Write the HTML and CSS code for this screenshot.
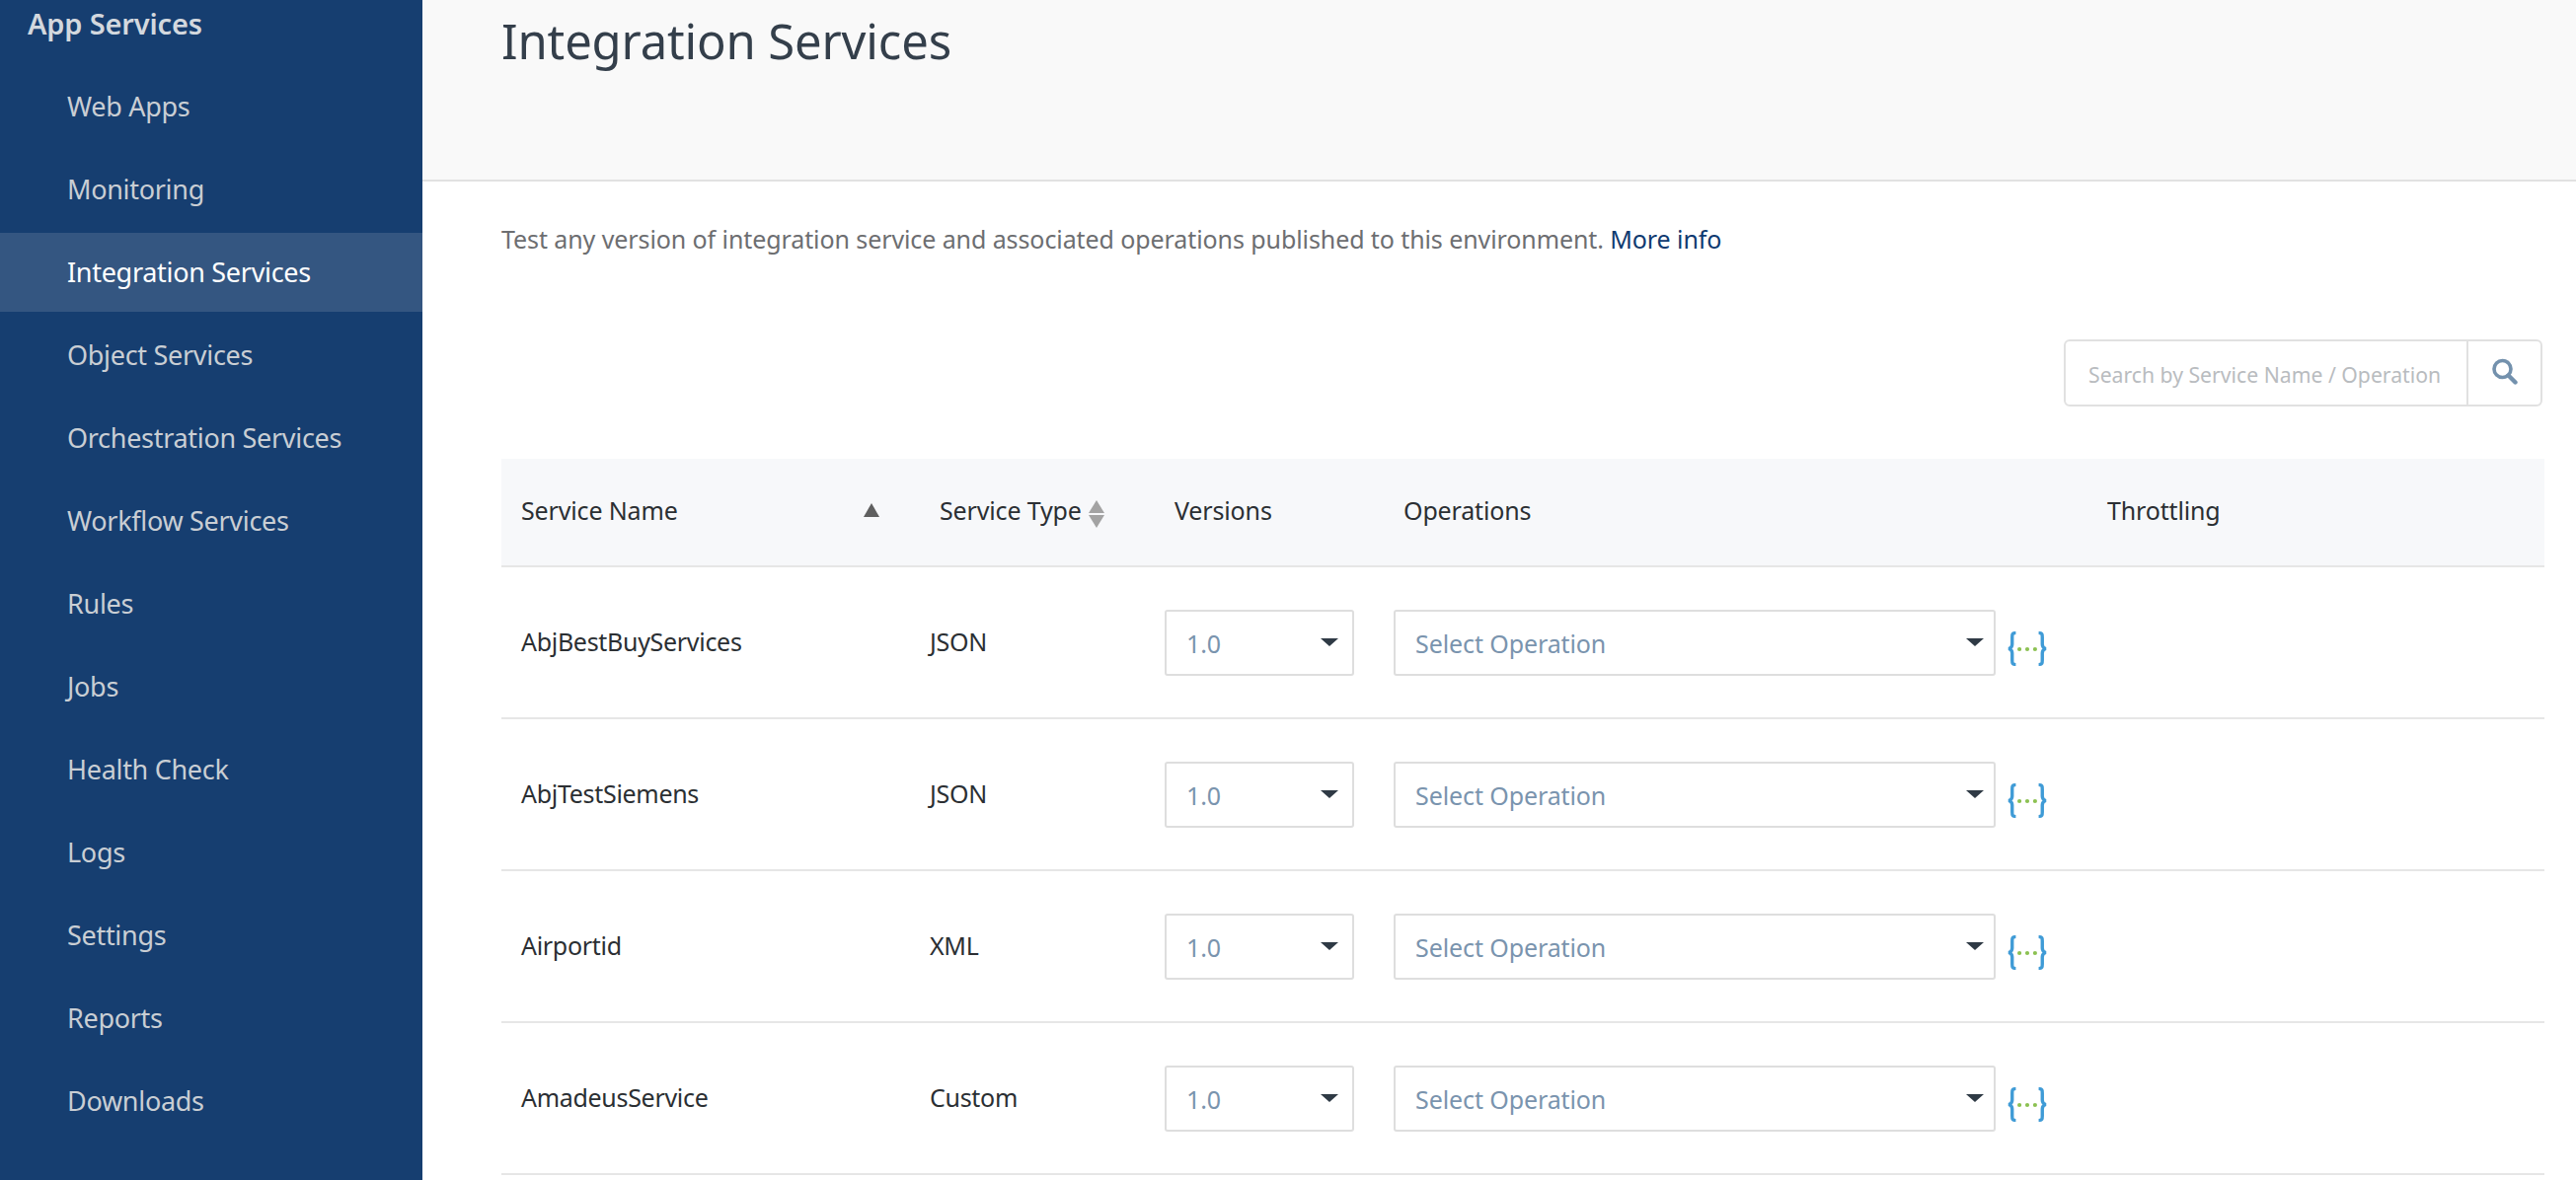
FILE: index.html
```html
<!DOCTYPE html>
<html lang="en">
<head>
  <meta charset="UTF-8">
  <title>Integration Services</title>
  <link rel="stylesheet" href="styles.css">
</head>
<body>
  <div class="page">
    <nav class="sidebar">
      <div class="nav-title">App Services</div>
      <a class="nav-item">Web Apps</a>
      <a class="nav-item">Monitoring</a>
      <a class="nav-item active">Integration Services</a>
      <a class="nav-item">Object Services</a>
      <a class="nav-item">Orchestration Services</a>
      <a class="nav-item">Workflow Services</a>
      <a class="nav-item">Rules</a>
      <a class="nav-item">Jobs</a>
      <a class="nav-item">Health Check</a>
      <a class="nav-item">Logs</a>
      <a class="nav-item">Settings</a>
      <a class="nav-item">Reports</a>
      <a class="nav-item">Downloads</a>
    </nav>

    <main class="main">
      <header class="page-header">
        <h1>Integration Services</h1>
      </header>

      <div class="content">
        <p class="intro">Test any version of integration service and associated operations published to this environment. <a class="more">More info</a></p>

        <div class="toolbar">
          <div class="search">
            <input type="text" placeholder="Search by Service Name / Operation">
            <button class="search-btn" type="button">
              <svg width="30" height="30" viewBox="0 0 30 30"><circle cx="12.500" cy="12" r="8.500" fill="none" stroke="#7391ad" stroke-width="3.600"/><path d="M18.500 18.500L25.500 25.500" stroke="#7391ad" stroke-width="4.400" stroke-linecap="round"/></svg>
            </button>
          </div>
        </div>

        <table>
          <colgroup>
            <col class="col-name"><col class="col-type"><col class="col-ver"><col class="col-op"><col class="col-thr">
          </colgroup>
          <thead>
            <tr>
              <th><div class="th-sort">Service Name <span class="sort-asc"></span></div></th>
              <th class="th-shift"><span class="th-type">Service Type <span class="sort-both"><i class="up"></i><i class="down"></i></span></span></th>
              <th class="th-shift">Versions</th>
              <th class="th-shift">Operations</th>
              <th>Throttling</th>
            </tr>
          </thead>
          <tbody id="rows"></tbody>
        </table>
      </div>
    </main>
  </div>

  <script>
    const servicos = [
      ['AbjBestBuyServices', 'JSON'],
      ['AbjTestSiemens', 'JSON'],
      ['Airportid', 'XML'],
      ['AmadeusService', 'Custom']
    ];

    const chaves = `<svg class="braces" width="40" height="35" viewBox="0 0 38 35" preserveAspectRatio="none">
      <path d="M8 1.500C4.500 1.500 4.500 3 4.500 6V13C4.500 15.500 3.500 17 1 17.500C3.500 18 4.500 19.500 4.500 22V29C4.500 32 4.500 33.500 8 33.500" fill="none" stroke="#3f9bd6" stroke-width="3.200"/>
      <path d="M30 1.500C33.500 1.500 33.500 3 33.500 6V13C33.500 15.500 34.500 17 37 17.500C34.500 18 33.500 19.500 33.500 22V29C33.500 32 33.500 33.500 30 33.500" fill="none" stroke="#3f9bd6" stroke-width="3.200"/>
      <circle cx="11.500" cy="18" r="2" fill="#8cc152"/><circle cx="19" cy="18" r="2" fill="#8cc152"/><circle cx="26.500" cy="18" r="2" fill="#8cc152"/>
    </svg>`;

    document.getElementById('rows').innerHTML = servicos.map(s => `
      <tr>
        <td class="cell-text">${s[0]}</td>
        <td class="cell-text">${s[1]}</td>
        <td><div class="select select-ver"><span>1.0</span><i class="caret"></i></div></td>
        <td><div class="op-cell"><div class="select select-op"><span>Select Operation</span><i class="caret"></i></div>${chaves}</div></td>
        <td></td>
      </tr>`).join('');
  </script>
</body>
</html>
```

FILE: styles.css
```css
html, body {
  margin: 0;
  height: 100%;
  overflow: hidden;
}

body {
  font-family: "Noto Sans", Arial, sans-serif;
  font-size: 25px;
  letter-spacing: -0.15px;
  color: #2b2f33;
  background: #fff;
}

.page {
  display: flex;
  height: 1196px;
}

.sidebar {
  width: 428px;
  flex: none;
  background: #163e70;
  color: #c9ced4;
}

.nav-title {
  height: 48px;
  line-height: 48px;
  margin-bottom: 20px;
  padding-left: 28px;
  font-weight: 600;
  font-size: 29px;
  color: #d3d8de;
}

.nav-item {
  display: block;
  height: 80px;
  line-height: 80px;
  margin-bottom: 4px;
  padding-left: 68px;
  font-size: 27px;
  letter-spacing: -0.3px;
}

.nav-item.active {
  background: #345681;
  color: #fff;
}

.main {
  flex: 1;
  min-width: 0;
}

.page-header {
  height: 184px;
  box-sizing: border-box;
  padding-left: 80px;
  background: #f9f9f9;
  border-bottom: 2px solid #e1e1e1;
}

.page-header h1 {
  margin: 0;
  font-size: 49px;
  font-weight: 400;
  line-height: 82px;
  color: #343f4b;
}

.content {
  padding: 0 32px 0 80px;
}

.intro {
  margin: 0;
  padding-top: 38px;
  line-height: 40px;
  letter-spacing: -0.09px;
  color: #6d6e71;
}

.more {
  color: #0f3a70;
}

.toolbar {
  display: flex;
  justify-content: flex-end;
  margin-top: 82px;
  padding-right: 2px;
}

.search {
  display: flex;
  width: 485px;
  height: 68px;
  box-sizing: border-box;
  border: 2px solid #e1e1e1;
  border-radius: 6px;
}

.search input {
  flex: 1;
  min-width: 0;
  border: 0;
  outline: 0;
  padding: 2px 0 0 23px;
  background: none;
  font-family: inherit;
  font-size: 21.200px;
}

.search input::placeholder {
  color: #b9bcbf;
  opacity: 1;
}

.search-btn {
  width: 75px;
  flex: none;
  border: 0;
  border-left: 2px solid #e1e1e1;
  background: none;
  padding: 0;
}

table {
  width: 100%;
  table-layout: fixed;
  border-collapse: collapse;
  margin-top: 53px;
}

.col-name { width: 414px; }
.col-type { width: 238px; }
.col-ver { width: 232px; }
.col-op { width: 723px; }

th {
  height: 104px;
  padding: 0 0 4px 20px;
  background: #f7f8fa;
  border-bottom: 2px solid #e6e6e6;
  font-weight: 400;
  text-align: left;
}

th.th-shift {
  padding-left: 30px;
}

.th-sort {
  display: flex;
  align-items: center;
  justify-content: space-between;
  padding-right: 31px;
}

.sort-asc {
  width: 0;
  height: 0;
  border-left: 8px solid transparent;
  border-right: 8px solid transparent;
  border-bottom: 14px solid #5f5f5f;
}

.th-type {
  display: inline-flex;
  align-items: center;
  gap: 7px;
  white-space: nowrap;
}

.sort-both {
  display: inline-flex;
  flex-direction: column;
  gap: 2px;
  margin-top: 8px;
}

.sort-both i {
  display: block;
  width: 0;
  height: 0;
  border-left: 8px solid transparent;
  border-right: 8px solid transparent;
}

.sort-both .up { border-bottom: 13px solid #a3a3a3; }
.sort-both .down { border-top: 13px solid #a3a3a3; }

td {
  height: 152px;
  padding: 0 0 0 20px;
  border-bottom: 2px solid #e6e6e6;
}

td.cell-text {
  height: 149px;
  padding-bottom: 3px;
  letter-spacing: -0.3px;
}

.select {
  display: flex;
  align-items: center;
  justify-content: space-between;
  height: 67px;
  box-sizing: border-box;
  padding: 2px 14px 0 20px;
  border: 2px solid #dedede;
  border-radius: 3px;
  color: #7a94ae;
  letter-spacing: -0.1px;
}

.select-ver { width: 192px; }
.select-op { width: 610px; padding-right: 10px; }

.caret {
  width: 0;
  height: 0;
  margin-top: -2px;
  border-left: 9px solid transparent;
  border-right: 9px solid transparent;
  border-top: 8px solid #2f3a45;
}

.op-cell {
  display: flex;
  align-items: center;
  gap: 12px;
}

.braces {
  flex: none;
  margin-top: 12px;
}
```
